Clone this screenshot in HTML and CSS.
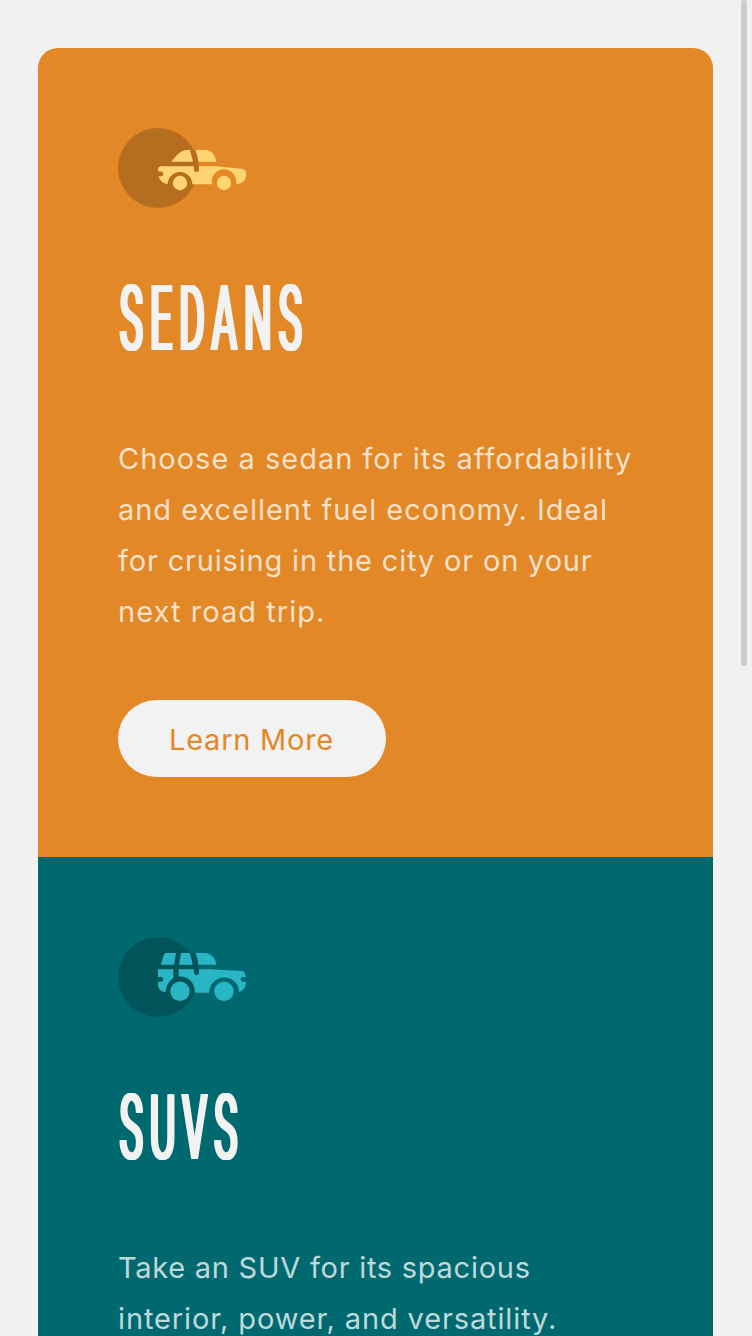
FILE: index.html
```html
<!DOCTYPE html>
<html lang="en">
<head>
<meta charset="utf-8">
<meta name="viewport" content="width=device-width">
<title>Car preview cards</title>
<link rel="stylesheet" href="styles.css">
</head>
<body>
<main class="cards">
  <section class="card sedans">
    <svg class="icon" viewBox="0 0 128 80" aria-hidden="true">
      <circle class="disc" cx="40" cy="40" r="40"/>
      <g class="car">
        <path d="M53 33.7L59 27Q64 22 69 22H72L75 33.7Z"/>
        <path d="M77.3 22H87C93 22 97 26 98.3 33.7H80Z"/>
        <path d="M42.5 38.3H98.7L123.5 40.7Q128 41.5 128 45V48.5Q127 55.5 118 56.3A12.3 12.3 0 1 0 94 56.3H74.3A12.3 12.3 0 1 0 49.7 56.3Q42.5 55 40.5 48.3H43A2.2 2.2 0 0 0 43 43.5H40V41Q40.5 39 42.5 38.3Z"/>
        <circle cx="62" cy="55" r="7.2"/><circle cx="106" cy="55" r="7.2"/>
      </g>
      <path class="seam" d="M72 22H77.3Q81 31 81 41.5A2.5 2.5 0 0 1 76 41.5Q76 32 72 22Z"/>
    </svg>
    <h2 class="title">SEDANS</h2>
    <p class="text"><span class="l1">Choose a sedan for its affordability</span><br><span class="l2">and excellent fuel economy. Ideal</span><br><span class="l3">for cruising in the city or on your</span><br><span class="l4">next road trip.</span></p>
    <a class="button">Learn More</a>
  </section>
  <section class="card suvs">
    <svg class="icon" viewBox="0 0 128 80" aria-hidden="true">
      <circle class="disc" cx="40" cy="40" r="40"/>
      <g class="car">
        <path d="M42.7 27.7L46 17.5Q46.5 16 48 16H58L56 27.7Z"/>
        <path d="M63 16H72L74.7 27.7H61Z"/>
        <path d="M77.3 16H87C93 16 97.5 21 98.3 27.7H80Z"/>
        <path d="M40 32.3H55.3V41Q48 46 47.5 55.5Q41 54 40 49V44.7H43A2.3 2.3 0 0 0 43 40H40Z"/>
        <path d="M60.7 32.3H92L124 34Q126 34.2 126.5 35.5L128 40H125A2.3 2.3 0 0 0 125 44.7H128Q127.5 53 121 55A14.7 14.7 0 1 0 91.3 55.7H76.7A14.7 14.7 0 0 0 60.7 39.5Z"/>
        <circle cx="62" cy="54.3" r="9.7"/><circle cx="106" cy="54.3" r="9.7"/>
      </g>
      <path class="seam" d="M72 16H77.3Q81 25 81 35.5A2.5 2.5 0 0 1 76 35.5Q76 26 72 16Z"/>
    </svg>
    <h2 class="title">SUVS</h2>
    <p class="text"><span class="l5">Take an SUV for its spacious</span><br><span class="l6">interior, power, and versatility.</span></p>
  </section>
</main>
<div class="scrollbar"></div>
</body>
</html>
```
FILE: styles.css
```css
* { box-sizing: border-box; }
body {
  display: flex; height: 1336px; margin: 0; padding: 48px 0 0 38px;
  overflow: hidden; background: #f1f1f1; font-family: Inter, sans-serif;
}
.cards { width: 675px; height: 1288px; border-radius: 20px 20px 0 0; overflow: hidden; }
.card { padding: 80px; }
.sedans { height: 809px; background: #e28826; --disc: #b56d1e; --car: #ffd473; }
.suvs { height: 479px; padding-bottom: 0; background: #006970; --disc: #00545a; --car: #2ab5c4; }
.icon { display: block; width: 128px; height: 80px; }
.disc, .seam { fill: var(--disc); }
.car { fill: var(--car); }
.title {
  width: 560px; height: 96px; margin: 64px 0 0;
  font: 400 90px/96px Roboto, sans-serif;
  letter-spacing: 16.5px; white-space: nowrap; color: #f2f2f2;
  transform: scaleX(.432); transform-origin: 0 0;
  text-shadow: 2px 0, 4px 0, 6px 0, 8px 0;
}
.text {
  margin: 65px 0 0; font-size: 29px; line-height: 51px;
  white-space: nowrap; color: rgba(255,255,255,.75);
}
.l1 { letter-spacing: 1px; }
.l2 { letter-spacing: .97px; }
.l3 { letter-spacing: .82px; }
.l4 { letter-spacing: 1.05px; }
.l5 { letter-spacing: .73px; }
.l6 { letter-spacing: .87px; }
.button {
  display: flex; align-items: center; justify-content: center;
  width: 268px; height: 77px; margin: 63px 0 0 -.5px; padding-top: 2px; border-radius: 39px;
  background: #f2f2f2; color: #e28826; font-size: 29px; letter-spacing: .75px;
}
.scrollbar {
  position: absolute; top: 0; left: 741px; width: 6px; height: 666px;
  border-radius: 3px; background: #cdcdcd;
}
```
